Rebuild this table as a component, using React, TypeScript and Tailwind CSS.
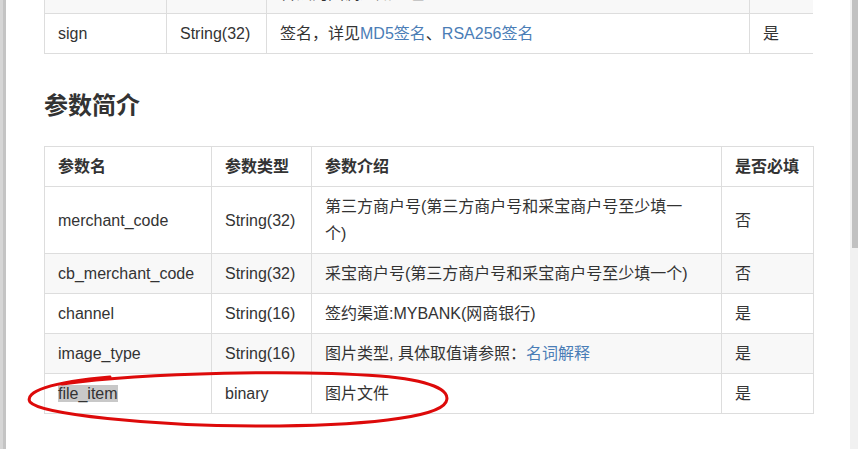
import React from "react";

type Row = {
  name: React.ReactNode;
  type: string;
  desc: React.ReactNode;
  required: string;
};

const link = "text-[#4a7db6]";

const rows: Row[] = [
  {
    name: "merchant_code",
    type: "String(32)",
    desc: (
      <>
        第三方商户号(第三方商户号和采宝商户号至少填一
        <br />
        个)
      </>
    ),
    required: "否",
  },
  {
    name: "cb_merchant_code",
    type: "String(32)",
    desc: "采宝商户号(第三方商户号和采宝商户号至少填一个)",
    required: "否",
  },
  {
    name: "channel",
    type: "String(16)",
    desc: "签约渠道:MYBANK(网商银行)",
    required: "是",
  },
  {
    name: "image_type",
    type: "String(16)",
    desc: (
      <>
        图片类型, 具体取值请参照：<span className={link}>名词解释</span>
      </>
    ),
    required: "是",
  },
  {
    name: <span className="bg-[#c8c8c8]">file_item</span>,
    type: "binary",
    desc: "图片文件",
    required: "是",
  },
];

const cell = "border border-[#dddddd] px-[13px] py-[6px] align-middle leading-[27px] text-left";

export default function App() {
  return (
    <div
      className="relative flex h-[449px] w-[858px] overflow-hidden bg-white text-[16px] text-[#333333]"
      style={{ fontFamily: '"Liberation Sans", Arial, "Noto Sans CJK SC", sans-serif' }}
    >
      <div className="flex w-[6px] shrink-0">
        <div className="w-[3px] bg-[#d6d6d6]" />
        <div className="w-[3px] bg-[#c4c4c4]" />
      </div>

      <div className="flex-1 pl-[38px]">
        {/* previous table, scrolled partly out of view */}
        <div className="h-[54px] w-[769px] overflow-hidden">
          <table className="-mt-[54px] w-[769px] table-fixed border-collapse">
            <colgroup>
              <col className="w-[122px]" />
              <col className="w-[100px]" />
              <col className="w-[483px]" />
              <col className="w-[64px]" />
            </colgroup>
            <tbody>
              <tr className="bg-[#f8f8f8]">
                <td className={cell} />
                <td className={cell} />
                <td className={cell}>
                  <span className="invisible">异步通知地址，用于接收签约结果的回调通知</span>
                  <br />
                  合法的回调通知地址
                </td>
                <td className={cell} />
              </tr>
              <tr>
                <td className={cell}>sign</td>
                <td className={cell}>String(32)</td>
                <td className={cell}>
                  签名，详见<span className={link}>MD5签名</span>、<span className={link}>RSA256签名</span>
                </td>
                <td className={cell}>是</td>
              </tr>
            </tbody>
          </table>
        </div>

        <h2 className="mt-[37px] text-[24px] font-bold leading-[30px] text-[#333333]">参数简介</h2>

        <table className="mt-[25px] w-[769px] table-fixed border-collapse">
          <colgroup>
            <col className="w-[167px]" />
            <col className="w-[100px]" />
            <col className="w-[410px]" />
            <col className="w-[92px]" />
          </colgroup>
          <thead>
            <tr>
              <th className={`${cell} font-bold`}>参数名</th>
              <th className={`${cell} font-bold`}>参数类型</th>
              <th className={`${cell} font-bold`}>参数介绍</th>
              <th className={`${cell} font-bold`}>是否必填</th>
            </tr>
          </thead>
          <tbody>
            {rows.map((r, i) => (
              <tr key={i} className={i % 2 === 1 ? "bg-[#f8f8f8]" : "bg-white"}>
                <td className={cell}>{r.name}</td>
                <td className={cell}>{r.type}</td>
                <td className={cell}>{r.desc}</td>
                <td className={cell}>{r.required}</td>
              </tr>
            ))}
          </tbody>
        </table>
      </div>

      <div className="w-[8px] shrink-0 bg-[#f1f1f1] pl-[2px]">
        <div className="h-[248px] bg-[#c1c1c1]" />
      </div>

      {/* hand-drawn annotation */}
      <svg className="pointer-events-none absolute left-0 top-0" width="858" height="449" viewBox="0 0 858 449">
        <path
          d="M62 384 C 150 372, 300 370, 380 376 C 430 380, 452 390, 446 402 C 438 418, 360 426, 260 426 C 150 426, 40 414, 30 402 C 24 392, 50 382, 110 377"
          fill="none"
          stroke="#dd0a0a"
          strokeWidth="3"
          strokeLinecap="round"
        />
      </svg>
    </div>
  );
}
